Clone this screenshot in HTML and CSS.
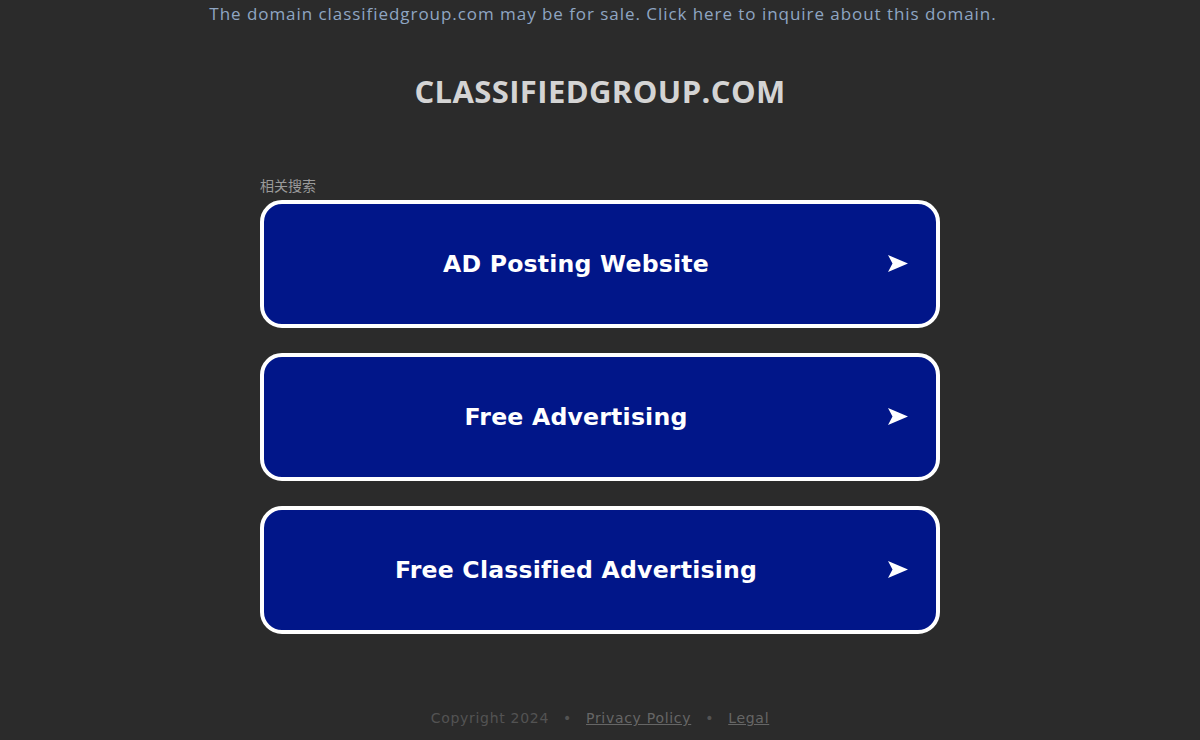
FILE: index.html
```html
<!DOCTYPE html>
<html>
<head>
<meta charset="utf-8">
<link rel="stylesheet" href="styles.css">
</head>
<body>
<div class="page">
  <p class="sale"><a href="#">The domain classifiedgroup.com may be for sale. Click here to inquire about this domain.</a></p>
  <h1 class="domain">CLASSIFIEDGROUP.COM</h1>
  <div class="related">
    <div class="label">相关搜索</div>
    <a class="box" href="#"><span class="text">AD Posting Website</span><svg class="arrow" viewBox="0 0 20 17" width="20" height="17"><path d="M0 0 L20 8.5 L0 17 L4.5 8.5 Z" fill="#fff"/></svg></a>
    <a class="box" href="#"><span class="text">Free Advertising</span><svg class="arrow" viewBox="0 0 20 17" width="20" height="17"><path d="M0 0 L20 8.5 L0 17 L4.5 8.5 Z" fill="#fff"/></svg></a>
    <a class="box" href="#"><span class="text">Free Classified Advertising</span><svg class="arrow" viewBox="0 0 20 17" width="20" height="17"><path d="M0 0 L20 8.5 L0 17 L4.5 8.5 Z" fill="#fff"/></svg></a>
  </div>
  <div class="footer">
    <span>Copyright 2024</span><span class="dot">•</span><a href="#">Privacy Policy</a><span class="dot">•</span><a href="#">Legal</a>
  </div>
</div>
</body>
</html>
```
FILE: styles.css
```css
html, body {
  margin: 0;
  padding: 0;
  background: #2b2b2b;
  height: 100%;
}
.page {
  display: flex;
  flex-direction: column;
  align-items: center;
  font-family: "Open Sans", "DejaVu Sans", sans-serif;
}
.sale {
  margin: 3px 0 0;
  padding-left: 6px;
  font-size: 17px;
  line-height: 22px;
  letter-spacing: 0.95px;
}
.sale a {
  color: #8fa6c3;
  text-decoration: none;
}
.domain {
  margin: 45px 0 0;
  font-family: "Open Sans", sans-serif;
  font-weight: 700;
  font-size: 31px;
  line-height: 42px;
  color: #d4d4d4;
  letter-spacing: 0.4px;
}
.related {
  width: 680px;
  margin-top: 66px;
  display: flex;
  flex-direction: column;
  gap: 25px;
}
.label {
  font-family: "Noto Sans CJK SC", sans-serif;
  font-size: 14px;
  line-height: 18px;
  color: #9a9a9a;
  margin-top: -2px;
  margin-bottom: -19px;
  height: 18px;
}
.box {
  box-sizing: border-box;
  height: 128px;
  border: 4px solid #ffffff;
  border-radius: 22px;
  background: #011689;
  display: flex;
  align-items: center;
  justify-content: center;
  position: relative;
  text-decoration: none;
  color: #ffffff;
}
.text {
  font-family: "DejaVu Sans", Verdana, sans-serif;
  font-weight: 700;
  font-size: 23.6px;
  margin-right: 48px;
  letter-spacing: 0.2px;
}
.arrow {
  position: absolute;
  right: 28px;
  top: 50%;
  margin-top: -9px;
}
.footer {
  margin-top: 76px;
  font-family: "DejaVu Sans", sans-serif;
  font-size: 14px;
  letter-spacing: 0.7px;
  color: #535353;
  display: flex;
}
.footer a {
  color: #666666;
}
.dot {
  margin: 0 14px;
}
```
